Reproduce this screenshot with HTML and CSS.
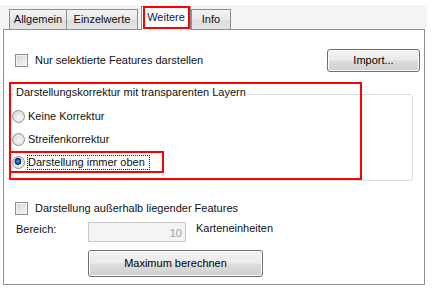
FILE: index.html
```html
<!DOCTYPE html>
<html lang="de">
<head>
<meta charset="utf-8">
<title>Weitere</title>
<link rel="stylesheet" href="styles.css">
</head>
<body>
<div class="window">
  <div class="tabstrip">
    <div class="tab tab-allgemein">Allgemein</div>
    <div class="tab tab-einzel">Einzelwerte</div>
    <div class="tab tab-active">Weitere<span class="mark mark-tab"></span></div>
    <div class="tab tab-info">Info</div>
  </div>
  <div class="panel">
    <div class="row-top">
      <div class="check"><span class="box"></span><span class="lbl">Nur selektierte Features darstellen</span></div>
      <div class="btn btn-import">Import...</div>
    </div>
    <div class="group">
      <div class="group-title">Darstellungskorrektur mit transparenten Layern</div>
      <div class="radios">
        <div class="radio-row"><span class="radio"></span><span class="lbl">Keine Korrektur</span></div>
        <div class="radio-row"><span class="radio"></span><span class="lbl">Streifenkorrektur</span></div>
        <div class="radio-row"><span class="radio radio-on"></span><span class="lbl focus">Darstellung immer oben</span></div>
      </div>
    </div>
    <div class="check check-second"><span class="box"></span><span class="lbl">Darstellung außerhalb liegender Features</span></div>
    <div class="row-range">
      <span class="lbl lbl-bereich">Bereich:</span>
      <div class="input">10</div>
      <span class="lbl lbl-unit">Karteneinheiten</span>
    </div>
    <div class="btn btn-max">Maximum berechnen</div>
  </div>
  <div class="mark mark-group"></div>
  <div class="mark mark-option"></div>
</div>
</body>
</html>
```

FILE: styles.css
```css
html, body {
  margin: 0;
  padding: 0;
  background: #ffffff;
}

body {
  font-family: "Liberation Sans", Arial, sans-serif;
  font-size: 11px;
  line-height: 13px;
  color: #111111;
}

.window {
  position: relative;
  width: 435px;
  height: 289px;
  padding-top: 5px;
  box-sizing: border-box;
}

.tabstrip {
  display: flex;
  align-items: flex-end;
  width: 427px;
  height: 24px;
  padding-left: 9px;
  box-sizing: border-box;
  background: #f4f4f4;
}

.tab {
  height: 20px;
  box-sizing: border-box;
  padding-top: 3px;
  text-align: center;
  border: 1px solid #8c8e94;
  border-bottom: none;
  background: linear-gradient(#f3f3f3, #e9e9e9 50%, #dedede 51%, #e4e4e4);
  white-space: nowrap;
}

.tab-allgemein { width: 58px; }
.tab-einzel { width: 72px; margin-left: -1px; }
.tab-info { width: 40px; }

.tab-active {
  position: relative;
  z-index: 1;
  width: 50px;
  height: 24px;
  margin-left: 3px;
  margin-bottom: -1px;
  padding-top: 4px;
  background: #ffffff;
  color: #141450;
}

.panel {
  margin-left: 3px;
  width: 422px;
  height: 256px;
  box-sizing: border-box;
  border: 1px solid #8c8e94;
  background: #ffffff;
  padding: 19px 4px 0 6px;
}

.row-top {
  display: flex;
  justify-content: space-between;
  align-items: center;
  height: 23px;
  padding-left: 5px;
}

.check {
  display: flex;
  align-items: center;
  gap: 7px;
}

.box {
  width: 13px;
  height: 13px;
  box-sizing: border-box;
  border: 1px solid #8f8f8f;
  background: linear-gradient(135deg, #d6d6d6, #f6f6f6);
  box-shadow: inset 0 0 0 1px #f3f3f3;
}

.btn {
  box-sizing: border-box;
  display: flex;
  align-items: center;
  justify-content: center;
  border: 1px solid #707070;
  border-radius: 3px;
  background: linear-gradient(#f2f2f2, #ebebeb 48%, #dddddd 52%, #cfcfcf);
  box-shadow: inset 0 0 0 1px #fcfcfc;
  color: #000000;
}

.btn-import {
  width: 93px;
  height: 23px;
}

.group {
  margin-top: 22px;
  margin-right: 7px;
  border: 1px solid #d5dfe5;
  border-radius: 3px;
  padding-bottom: 10px;
}

.group-title {
  display: block;
  width: fit-content;
  margin-top: -9px;
  margin-left: 4px;
  padding: 0 1px;
  background: #ffffff;
}

.radios {
  display: flex;
  flex-direction: column;
  gap: 7px;
  margin-top: 9px;
  padding-left: 1px;
}

.radio-row {
  display: flex;
  align-items: center;
  height: 16px;
}

.radio {
  width: 13px;
  height: 13px;
  box-sizing: border-box;
  border-radius: 50%;
  border: 1px solid #8f8f8f;
  background: radial-gradient(circle at 60% 60%, #f8f8f8, #d4d4d4);
  margin-right: 2px;
}

.radio-on {
  background:
    radial-gradient(circle at 45% 40%, #6fb4ee 0, #1d5fa8 1.6px, #0d2e5e 3px, #0d2e5e 3.3px, transparent 3.6px),
    radial-gradient(circle at 60% 60%, #f8f8f8, #d4d4d4);
}

.radio-row .lbl {
  margin-left: 1px;
}

.radio-row .focus {
  margin-left: 0;
  border: 1px dotted #222222;
  padding: 0 4px 0 0;
}

.check-second {
  margin-top: 19px;
  height: 16px;
  padding-left: 5px;
}

.row-range {
  display: flex;
  align-items: flex-start;
  margin-top: 6px;
  padding-left: 6px;
}

.lbl-bereich {
  width: 72px;
  margin-top: 1px;
}

.input {
  width: 98px;
  height: 20px;
  box-sizing: border-box;
  border: 1px solid #c9c9c9;
  background: #f4f4f4;
  color: #a0a0a0;
  text-align: right;
  padding: 4px 3px 0 0;
}

.lbl-unit {
  margin-left: 10px;
}

.btn-max {
  margin-top: 8px;
  margin-left: 78px;
  width: 175px;
  height: 27px;
}

.mark {
  position: absolute;
  box-sizing: border-box;
  border: 2px solid #ff0000;
  pointer-events: none;
}

.mark-tab {
  top: -1px;
  left: 1px;
  right: 0;
  bottom: 1px;
}

.mark-group {
  left: 9px;
  top: 82px;
  width: 353px;
  height: 98px;
}

.mark-option {
  left: 9px;
  top: 151px;
  width: 155px;
  height: 22px;
}
```
